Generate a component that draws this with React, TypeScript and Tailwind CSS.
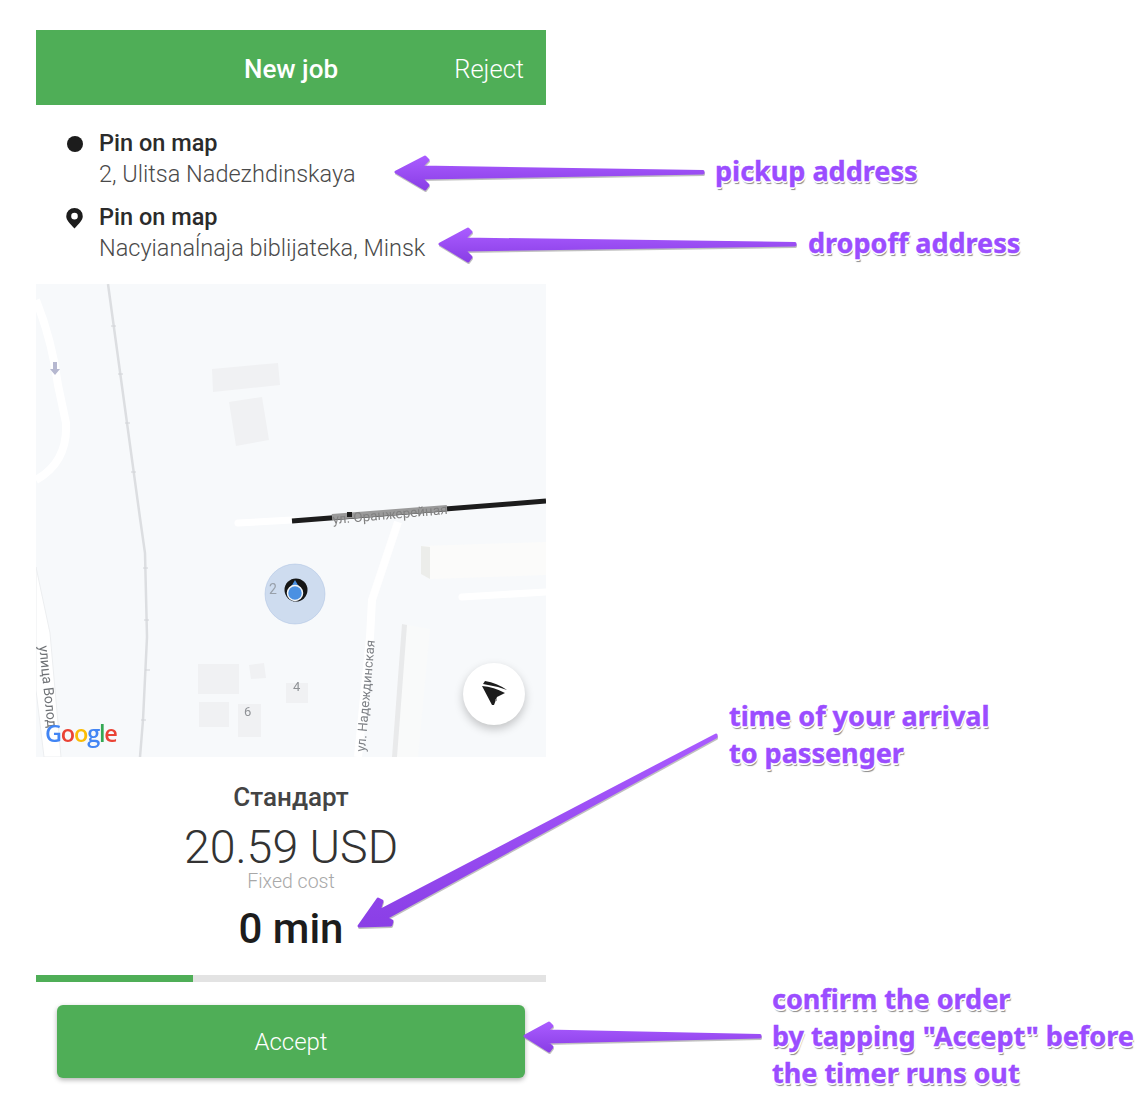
const outline =
  "[-webkit-text-stroke:0.4px_#9b4dff] [text-shadow:-1px_-1px_0_#fff,1px_-1px_0_#fff,-1px_1px_0_#fff,1px_1px_0_#fff,-2px_0_0_#fff,2px_0_0_#fff,0_-2px_0_#fff,0_2px_0_#fff,1px_3px_1px_#8a8a8a]";

const Note = ({ className, lines }: { className: string; lines: string[] }) => (
  <div
    className={`absolute whitespace-nowrap font-['Noto_Sans',sans-serif] font-bold text-[27px] leading-[37px] text-[#9b4dff] ${outline} ${className}`}
  >
    {lines.map((line) => (
      <div key={line}>{line}</div>
    ))}
  </div>
);

const Arrows = () => (
  <svg className="absolute left-0 top-0 pointer-events-none" width="1144" height="1108" viewBox="0 0 1144 1108">
    <defs>
      <linearGradient id="pur" x1="0" y1="0" x2="0" y2="1">
        <stop offset="0" stopColor="#a95bff" />
        <stop offset="1" stopColor="#8a3fe6" />
      </linearGradient>
    </defs>
    {[
      "M396 172 L425 157 L428 160 L421 167 L703 171.5 L703 173 L421 178 L428 185 L425 189 Z",
      "M440 244 L468 229 L471 232 L464 239 L795 243.5 L795 245 L464 250 L471 257 L468 261 Z",
      "M359 926 L378 899 L382 901 L379 911 L716 735 L716 737 L386 918 L392 921 L391 925 Z",
      "M525 1036 L549 1023 L552 1026 L546 1031 L760 1035.5 L760 1037 L546 1042 L552 1047 L549 1051 Z",
    ].map((d) => (
      <g key={d} strokeLinejoin="round">
        <path d={d} fill="#8d8d8d" stroke="#8d8d8d" strokeWidth="3" transform="translate(0.5 1.5)" opacity="0.55" />
        <path d={d} fill="url(#pur)" stroke="url(#pur)" strokeWidth="3" />
      </g>
    ))}
  </svg>
);

const MapDrawing = () => (
  <svg className="block blur-[0.4px]" width="510" height="473" viewBox="36 284 510 473">
    <rect x="36" y="284" width="510" height="473" fill="#f7f9fb" />
    {/* roads */}
    <path d="M36 300 Q52 340 58 385 L66 423 Q68 462 36 480" fill="none" stroke="#fff" strokeWidth="8" />
    <polygon points="36,567 50,633 61,757 44,757 36,690" fill="#fff" stroke="#eceef0" strokeWidth="1" />
    <path d="M108 284 L140 518 L145 553 L147 637 L143 720 L140 757" fill="none" stroke="#dcdee1" strokeWidth="2.5" />
    <g stroke="#d2d4d8" strokeWidth="1">
      <path d="M111 326 L116 326 M118 374 L123 374 M125 423 L130 423 M131 472 L136 472 M143 568 L148 568 M144 620 L149 620 M145 670 L150 670 M141 720 L146 720" />
    </g>
    <path d="M398 522 L372 600 L370 637 L358 757" fill="none" stroke="#fff" strokeWidth="8" strokeLinejoin="round" />
    <path d="M238 523 L292 520" fill="none" stroke="#fff" strokeWidth="7" strokeLinecap="round" />
    <path d="M462 597 L546 592" fill="none" stroke="#fff" strokeWidth="7" strokeLinecap="round" />
    <path d="M292 521 L546 501" fill="none" stroke="#1c1c1c" strokeWidth="5" />
    <path d="M332 517 L447 508" fill="none" stroke="#9a9a9a" strokeWidth="6" />
    <rect x="347" y="512" width="5" height="5" fill="#1c1c1c" />
    {/* one way arrow */}
    <path d="M53 362 L57 362 L57 369 L60 369 L55 375 L50 369 L53 369 Z" fill="#b6b8d0" />
    {/* buildings */}
    <g fill="#f0f1f3">
      <polygon points="212,369 278,363 280,385 213,392" />
      <polygon points="229,402 262,397 269,440 236,446" />
      <rect x="198" y="664" width="41" height="30" />
      <polygon points="249,665 264,663 266,678 251,679" />
      <rect x="286" y="683" width="22" height="20" />
      <rect x="199" y="702" width="30" height="25" />
      <rect x="238" y="704" width="23" height="33" />
    </g>
    <polygon points="421,546 546,542 546,575 430,579" fill="#fbfbfa" />
    <polygon points="421,546 430,547 430,579 421,574" fill="#ecedea" />
    <polygon points="402,624 430,629 418,757 392,757" fill="#f9fafa" />
    <polygon points="402,624 407,625 397,757 392,757" fill="#e9eaeb" />
    {/* labels */}
    <g fontFamily="Roboto, sans-serif" fill="#8f9296">
      <text x="333" y="524" fontSize="13.5" transform="rotate(-5 333 524)" fill="#808080">ул. Оранжерейная</text>
      <text x="365" y="752" fontSize="13" transform="rotate(-85 365 752)" fill="#7d8085">ул. Надеждинская</text>
      <text x="39" y="646" fontSize="14" transform="rotate(84 39 646)" fill="#6f7276">улица Волод</text>
      <text x="293" y="691" fontSize="13">4</text>
      <text x="244" y="716" fontSize="13">6</text>
    </g>
    {/* my location */}
    <circle cx="295" cy="594" r="30" fill="#cedcef" stroke="#a9bfe0" strokeWidth="0.5" />
    <text x="269" y="594" fontSize="14" fontFamily="Roboto, sans-serif" fill="#98a0aa">2</text>
    <circle cx="296" cy="590" r="11.5" fill="#161616" />
    <path d="M295 580 L302 592 L288 592 Z" fill="#4a8fe0" />
    <circle cx="295" cy="593" r="7.5" fill="#4a90e2" stroke="#f4f6f8" strokeWidth="1.5" />
    {/* google logo */}
    <text x="45" y="742" fontSize="23.5" fontWeight="600" fontFamily="'Open Sans', sans-serif" letterSpacing="-1.2">
      <tspan fill="#4285f4">G</tspan>
      <tspan fill="#ea4335">o</tspan>
      <tspan fill="#fbbc05">o</tspan>
      <tspan fill="#4285f4">g</tspan>
      <tspan fill="#34a853">l</tspan>
      <tspan fill="#ea4335">e</tspan>
    </text>
  </svg>
);

const Address = ({ icon, title, text }: { icon: React.ReactNode; title: string; text: string }) => (
  <div className="flex">
    <div className="w-[63px] h-[31px] flex items-center justify-center pl-[14px] shrink-0">{icon}</div>
    <div className="text-[23.5px] leading-[31px]">
      <div className="font-medium text-[#2b2b2b]">{title}</div>
      <div className="font-light text-[#4a4a4a]">{text}</div>
    </div>
  </div>
);

export default function App() {
  return (
    <div className="relative w-[1144px] h-[1108px] overflow-hidden bg-white pt-[30px] pl-[36px] font-['Roboto',sans-serif]">
      <div className="w-[510px] flex flex-col">
        <header className="relative h-[75px] pt-[4px] bg-[#4fae57] flex items-center justify-center text-white">
          <span className="text-[26px] font-medium">New job</span>
          <span className="absolute right-[22px] text-[25.5px] font-light">Reject</span>
        </header>

        <div className="flex flex-col gap-[12px] pt-[23px] pb-[20px]">
          <Address icon={<span className="block w-4 h-4 rounded-full bg-[#1c1c1c]" />} title="Pin on map" text="2, Ulitsa Nadezhdinskaya" />
          <Address
            icon={
              <svg width="19" height="22" viewBox="0 0 20 24">
                <path
                  fillRule="evenodd"
                  d="M10 1a9 9 0 0 1 9 9c0 4.4-4 8-9 13.4C5 18 1 14.4 1 10a9 9 0 0 1 9-9Zm0 5.4a3.6 3.6 0 1 0 0 7.2 3.6 3.6 0 0 0 0-7.2Z"
                  fill="#1c1c1c"
                />
              </svg>
            }
            title="Pin on map"
            text="Nacyianaĺnaja biblijateka, Minsk"
          />
        </div>

        <div className="relative h-[473px] overflow-hidden">
          <MapDrawing />
          <div className="absolute left-[427px] top-[379px] w-[62px] h-[62px] rounded-full bg-white shadow-[0_4px_10px_rgba(0,0,0,0.22)] flex items-center justify-center">
            <svg width="30" height="30" viewBox="0 0 30 30">
              <path d="M6 2 Q18 4 28 11 Q17 7 4 5 Z" fill="#1c1c1c" />
              <path d="M3 7 Q15 8 26 14 L18 18 L15 26 L13 26 Z" fill="#1c1c1c" />
              <circle cx="17" cy="21" r="1" fill="#888" />
            </svg>
          </div>
        </div>

        <div className="flex flex-col items-center">
          <div className="mt-[25px] text-[26px] leading-[30px] font-medium text-[#444]">Стандарт</div>
          <div className="mt-[11px] text-[46.5px] leading-[48px] font-light text-[#333]">20.59 USD</div>
          <div className="text-[19.5px] leading-[22px] font-light text-[#a8a8a8]">Fixed cost</div>
          <div className="mt-[11px] text-[42px] leading-[50px] font-medium text-[#1c1c1c]">0 min</div>
        </div>

        <div className="mt-[21px] h-[7px] bg-[#e3e3e3]">
          <div className="h-full w-[157px] bg-[#4fae57]" />
        </div>

        <div className="px-[21px] pt-[23px]">
          <button className="w-[468px] h-[73px] rounded-[6px] bg-[#4fae57] text-white text-[24px] font-light shadow-[0_2px_5px_rgba(0,0,0,0.3)]">
            Accept
          </button>
        </div>
      </div>

      <Arrows />
      <Note className="left-[715px] top-[152px]" lines={["pickup address"]} />
      <Note className="left-[808px] top-[224px]" lines={["dropoff address"]} />
      <Note className="left-[729px] top-[697px]" lines={["time of your arrival", "to passenger"]} />
      <Note className="left-[772px] top-[980px]" lines={["confirm the order", 'by tapping "Accept" before', "the timer runs out"]} />
    </div>
  );
}
